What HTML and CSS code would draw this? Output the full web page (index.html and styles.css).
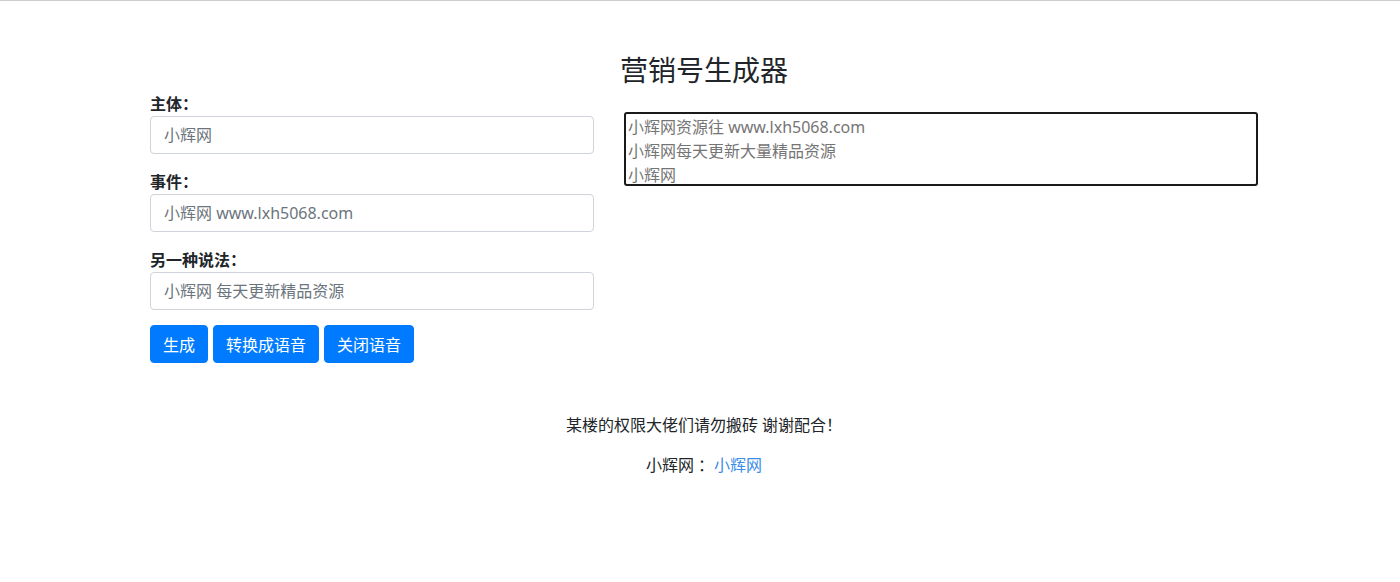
FILE: index.html
```html
<!DOCTYPE html>
<html>
<head>
  <meta charset="utf-8">
  <title>营销号生成器</title>
  <link rel="stylesheet" href="styles.css">
</head>
<body>
  <div class="topline"></div>
  <div class="container">
    <h1 class="title">营销号生成器</h1>
    <div class="row">
      <div class="col-form">
        <div class="form-group">
          <label for="subject">主体：</label>
          <input type="text" id="subject" placeholder="小辉网">
        </div>
        <div class="form-group">
          <label for="event">事件：</label>
          <input type="text" id="event" placeholder="小辉网 www.lxh5068.com">
        </div>
        <div class="form-group">
          <label for="other">另一种说法：</label>
          <input type="text" id="other" placeholder="小辉网 每天更新精品资源">
        </div>
        <div class="buttons">
          <button class="btn">生成</button>
          <button class="btn">转换成语音</button>
          <button class="btn">关闭语音</button>
        </div>
      </div>
      <div class="col-output">
        <textarea class="output" rows="3" placeholder="小辉网资源往 www.lxh5068.com&#10;小辉网每天更新大量精品资源&#10;小辉网"></textarea>
      </div>
    </div>
    <div class="footer">
      <p>某楼的权限大佬们请勿搬砖 谢谢配合！</p>
      <p>小辉网 ：<a href="#">小辉网</a></p>
    </div>
  </div>
</body>
</html>
```

FILE: styles.css
```css
body {
  margin: 0;
  padding: 0;
  font-family: "Noto Sans", "Noto Sans CJK SC", sans-serif;
  font-size: 16px;
  line-height: 24px;
  color: #212529;
  background-color: #ffffff;
}
.topline {
  height: 1px;
  background-color: #cccccc;
}
.container {
  width: 1108px;
  margin: 0 auto;
  padding-left: 8px;
}
.title {
  margin: 52px 0 5px 0;
  text-align: center;
  font-size: 28px;
  font-weight: 400;
  line-height: 34px;
}
.row {
  display: flex;
  gap: 30px;
}
.col-form {
  width: 444px;
}
.col-output {
  flex: 1;
  padding-top: 20px;
}
.form-group {
  margin-bottom: 16px;
}
.form-group label {
  display: block;
  font-weight: bold;
}
.form-group input {
  display: block;
  box-sizing: border-box;
  width: 100%;
  height: 38px;
  padding: 6px 13px;
  font-family: inherit;
  font-size: 16px;
  color: #495057;
  border: 1px solid #ced4da;
  border-radius: 4px;
  outline: none;
}
.form-group input::placeholder {
  color: #6c757d;
}
.buttons {
  display: flex;
  gap: 5px;
  margin-top: -1px;
}
.btn {
  height: 38px;
  padding: 0 12px;
  font-family: inherit;
  font-size: 16px;
  color: #ffffff;
  background-color: #007bff;
  border: 1px solid #007bff;
  border-radius: 4px;
  cursor: pointer;
}
.output {
  display: block;
  box-sizing: border-box;
  width: 634px;
  height: 74px;
  padding: 1px 2px;
  font-family: inherit;
  font-size: 16px;
  line-height: 24px;
  border: 2px solid #1a1a1a;
  border-radius: 3px;
  resize: none;
  overflow: hidden;
  outline: none;
}
.output::placeholder {
  color: #757575;
}
.footer {
  margin-top: 50px;
  text-align: center;
}
.footer p {
  margin: 0 0 16px 0;
}
.footer a {
  color: #3a8ee6;
  text-decoration: none;
}
```
